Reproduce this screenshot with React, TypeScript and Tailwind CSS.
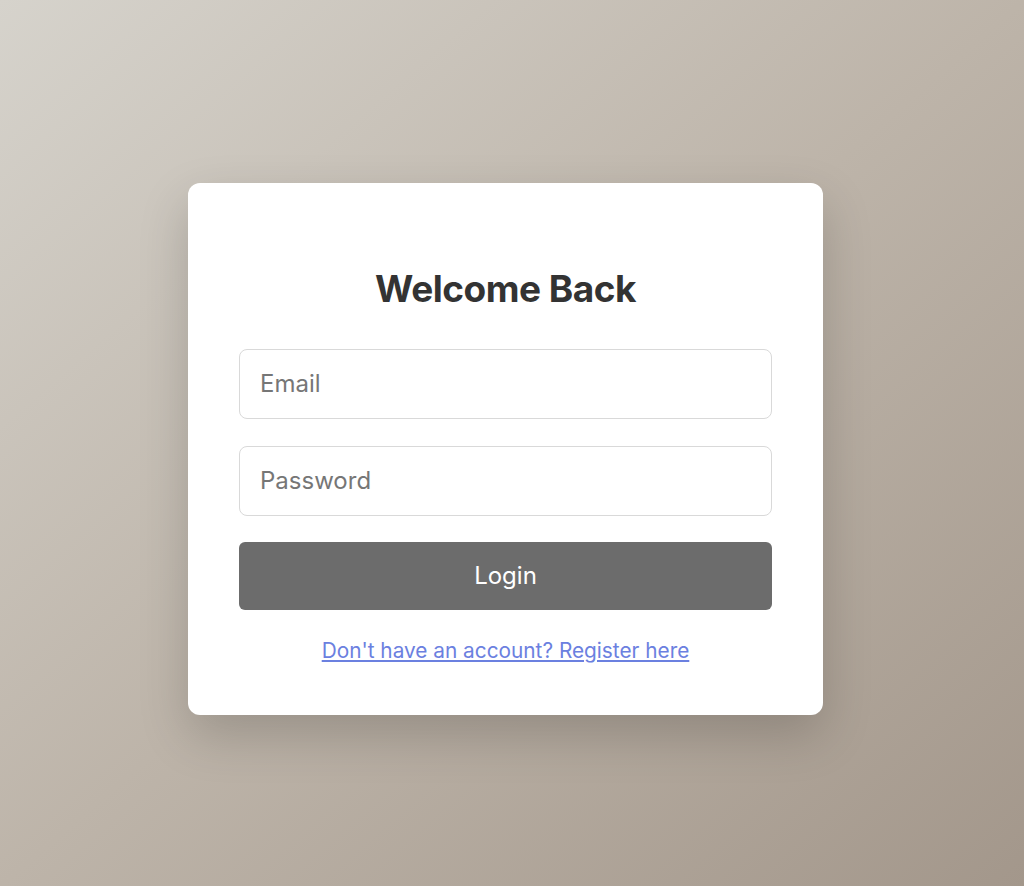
import { useState } from 'react';

export default function App() {
  const [email, setEmail] = useState('');
  const [password, setPassword] = useState('');

  return (
    <div
      className="min-h-screen w-full flex items-center justify-center pr-[13px] pt-[11px] bg-gradient-to-br from-[#d6d3cc] via-[#bdb4a9] to-[#a3978b]"
      style={{ fontFamily: 'Inter, "Noto Sans", sans-serif' }}
    >
      <div className="w-[635px] bg-white rounded-xl shadow-[0_20px_50px_rgba(0,0,0,0.18)] px-[51px] pt-[84px] pb-[49px]">
        <h1 className="text-center text-[37px] leading-[44px] font-bold text-[#333333] tracking-[-0.5px] mb-[38px]">
          Welcome Back
        </h1>
        <form className="flex flex-col" onSubmit={e => e.preventDefault()}>
          <input
            type="email"
            placeholder="Email"
            value={email}
            onChange={e => setEmail(e.target.value)}
            className="h-[70px] w-full border border-[#d9d9d9] rounded-lg px-[20px] text-[24px] text-[#333] placeholder:text-[#767676] outline-none"
          />
          <input
            type="password"
            placeholder="Password"
            value={password}
            onChange={e => setPassword(e.target.value)}
            className="h-[70px] w-full border border-[#d9d9d9] rounded-lg px-[20px] text-[24px] text-[#333] placeholder:text-[#767676] outline-none mt-[27px]"
          />
          <button
            type="submit"
            className="h-[68px] w-full bg-[#6c6c6c] text-white text-[24px] rounded-md mt-[26px]"
          >
            Login
          </button>
        </form>
        <div className="text-center mt-[27px] leading-[28px]">
          <a href="#" className="text-[20.8px] text-[#6b80e0] underline underline-offset-2">
            Don't have an account? Register here
          </a>
        </div>
      </div>
    </div>
  );
}
